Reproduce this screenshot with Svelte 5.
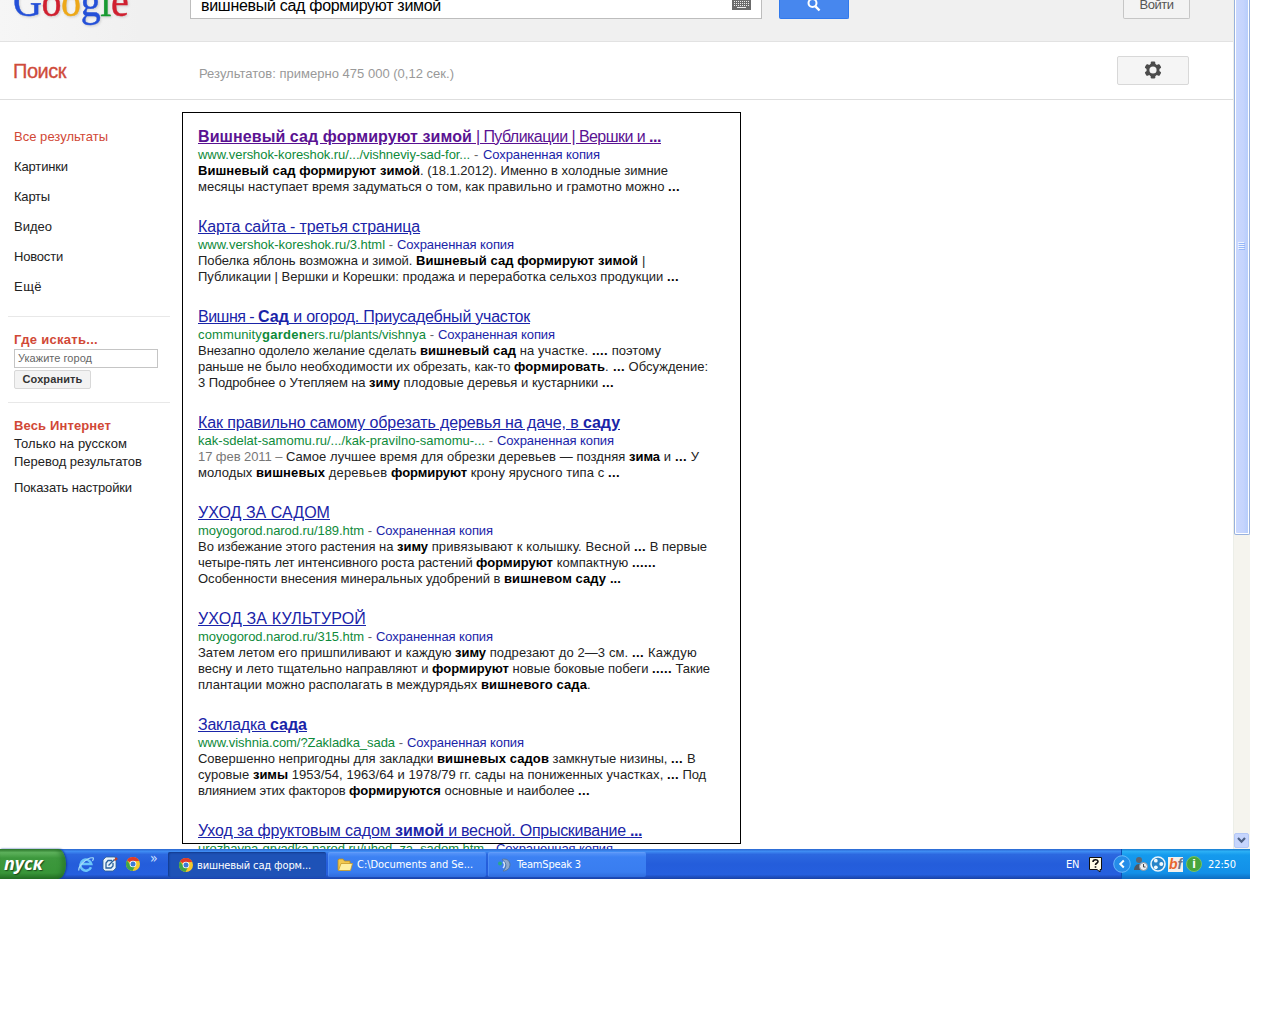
<script>
  // Stretches or tightens a run of text so that it fills the given width.
  function fit(node, width) {
    const natural = node.getBoundingClientRect().width;
    node.style.letterSpacing = (width - natural) / [...node.textContent].length + 'px';
  }

  // Each run: [text, right edge, bold]. Runs of a line start at LEFT.
  const LEFT = 198;
  const runs = (line) =>
    line.map(([text, end, bold], i) => ({ text, bold, width: end - (i ? line[i - 1][1] : LEFT) }));

  const results = [
    {
      visited: true,
      title: [['Вишневый сад формируют зимой', 472, 1], [' | Публикации | Вершки и ', 649], ['...', 661, 1]],
      url: [['www.vershok-koreshok.ru/.../vishneviy-sad-for...', 470]],
      cached: 600,
      lines: [
        [['Вишневый сад формируют зимой', 420, 1], ['. (18.1.2012). Именно в холодные зимние', 668]],
        [['месяцы наступает время задуматься о том, как правильно и грамотно можно ', 668], ['...', 680, 1]]
      ]
    },
    {
      title: [['Карта сайта - третья страница', 420]],
      url: [['www.vershok-koreshok.ru/3.html', 385]],
      cached: 514,
      lines: [
        [['Побелка яблонь возможна и зимой. ', 416], ['Вишневый сад формируют зимой', 638, 1], [' |', 646]],
        [['Публикации | Вершки и Корешки: продажа и переработка сельхоз продукции ', 667], ['...', 679, 1]]
      ]
    },
    {
      title: [['Вишня - ', 258], ['Сад', 289, 1], [' и огород. Приусадебный участок', 530]],
      url: [['community', 262], ['garden', 307, 1], ['ers.ru/plants/vishnya', 426]],
      cached: 555,
      lines: [
        [['Внезапно одолело желание сделать ', 420], ['вишневый сад', 516, 1], [' на участке. ', 592], ['....', 608, 1], [' поэтому', 661]],
        [['раньше не было необходимости их обрезать, как-то ', 514], ['формировать', 605, 1], ['. ', 613], ['...', 625, 1], [' Обсуждение:', 708]],
        [['3 Подробнее о Утепляем на ', 369], ['зиму', 400, 1], [' плодовые деревья и кустарники ', 602], ['...', 614, 1]]
      ]
    },
    {
      title: [['Как правильно самому обрезать деревья на даче, в ', 583], ['саду', 620, 1]],
      url: [['kak-sdelat-samomu.ru/.../kak-pravilno-samomu-...', 485]],
      cached: 614,
      date: true,
      lines: [
        [['17 фев 2011 – ', 286], ['Самое лучшее время для обрезки деревьев — поздняя ', 629], ['зима', 660, 1], [' и ', 675], ['...', 687, 1], [' У', 699]],
        [['молодых ', 256], ['вишневых', 325, 1], [' деревьев ', 391], ['формируют', 467, 1], [' крону ярусного типа с ', 608], ['...', 620, 1]]
      ]
    },
    {
      title: [['УХОД ЗА САДОМ', 330]],
      url: [['moyogorod.narod.ru/189.htm', 364]],
      cached: 493,
      lines: [
        [['Во избежание этого растения на ', 397], ['зиму', 428, 1], [' привязывают к колышку. Весной ', 634], ['...', 646, 1], [' В первые', 707]],
        [['четыре-пять лет интенсивного роста растений ', 476], ['формируют', 553, 1], [' компактную ', 632], ['......', 656, 1]],
        [['Особенности внесения минеральных удобрений в ', 504], ['вишневом саду ...', 621, 1]]
      ]
    },
    {
      title: [['УХОД ЗА КУЛЬТУРОЙ', 366]],
      url: [['moyogorod.narod.ru/315.htm', 364]],
      cached: 493,
      lines: [
        [['Затем летом его пришпиливают и каждую ', 455], ['зиму', 486, 1], [' подрезают до 2—3 см. ', 632], ['...', 644, 1], [' Каждую', 697]],
        [['весну и лето тщательно направляют и ', 432], ['формируют', 509, 1], [' новые боковые побеги ', 652], ['.....', 672, 1], [' Такие', 710]],
        [['плантации можно располагать в междурядьях ', 481], ['вишневого сада', 587, 1], ['.', 590]]
      ]
    },
    {
      title: [['Закладка ', 270], ['сада', 307, 1]],
      url: [['www.vishnia.com/?Zakladka_sada', 395]],
      cached: 524,
      lines: [
        [['Совершенно непригодны для закладки ', 437], ['вишневых садов', 549, 1], [' замкнутые низины, ', 671], ['...', 683, 1], [' В', 696]],
        [['суровые ', 253], ['зимы', 288, 1], [' 1953/54, 1963/64 и 1978/79 гг. сады на пониженных участках, ', 667], ['...', 679, 1], [' Под', 706]],
        [['влиянием этих факторов ', 349], ['формируются', 441, 1], [' основные и наиболее ', 578], ['...', 590, 1]]
      ]
    },
    {
      title: [['Уход за фруктовым садом ', 395], ['зимой', 444, 1], [' и весной. Опрыскивание ', 630], ['...', 642, 1]],
      url: [['urozhayna-gryadka.narod.ru/uhod_za_sadom.htm', 484]],
      cached: 613,
      lines: []
    }
  ];

  const nav = [['Картинки', 54], ['Карты', 36], ['Видео', 38], ['Новости', 49], ['Ещё', 28]];
  const logo = [['G', 'b'], ['o', 'r'], ['o', 'y'], ['g', 'b'], ['l', 'g'], ['e', 'r']];
</script>

{#snippet text(line)}{#each runs(line) as r}<span class:bold={r.bold} use:fit={r.width}>{r.text}</span>{/each}{/snippet}

{#snippet chrome()}
  <svg width="14" height="14" viewBox="0 0 14 14">
    <circle cx="7" cy="7" r="7" fill="#f5c92c" />
    <path d="M7 7 1 3.4A7 7 0 0 1 13.2 4L7 4.2z" fill="#df3b2b" />
    <path d="M1 3.4A7 7 0 0 0 6.5 14L9 9 5 8.5z" fill="#3fa548" />
    <circle cx="7" cy="7" r="3.3" fill="#fff" />
    <circle cx="7" cy="7" r="2.5" fill="#3c7ad6" />
  </svg>
{/snippet}

<div class="screen">
  <div class="window">
    <div class="page">
      <header>
        <div class="logo">{#each logo as [ch, c]}<span class={c}>{ch}</span>{/each}</div>
        <div class="query">
          <span use:fit={240}>вишневый сад формируют зимой</span>
          <svg width="19" height="14" viewBox="0 0 19 14">
            <path d="M0 0h19v14H0z" fill="#6b6b6b" />
            <path d="M2 5.500h15M2 7.500h15M2 9.500h15" stroke="#eee" stroke-dasharray="1 1" />
            <path d="M5 11.500h9" stroke="#eee" />
          </svg>
        </div>
        <div class="search">
          <svg width="14" height="15" viewBox="0 0 14 15" fill="none" stroke="#fff" stroke-width="2">
            <circle cx="5.5" cy="6" r="4" /><path d="m8.5 9.3 4 4.2" stroke-width="2.4" />
          </svg>
        </div>
        <div class="login"><span use:fit={34}>Войти</span></div>
      </header>

      <div class="bar">
        <h1><span use:fit={53}>Поиск</span></h1>
        <div class="stats"><span use:fit={255}>Результатов: примерно 475 000 (0,12 сек.)</span></div>
        <div class="gear">
          <svg width="18" height="18" viewBox="-9 -9 18 18">
            <g fill="#4c4c4c">
              {#each [0, 60, 120] as a}<rect x="-2.3" y="-8.5" width="4.6" height="17" rx="1.2" transform="rotate({a})" />{/each}
            </g>
            <circle r="5" fill="none" stroke="#4c4c4c" stroke-width="3" />
            <circle r="3.6" fill="#f5f5f5" />
          </svg>
        </div>
      </div>

      <div class="content">
        <aside>
          <nav>
            <div class="current"><span use:fit={94}>Все результаты</span></div>
            {#each nav as [label, w]}<div><span use:fit={w}>{label}</span></div>{/each}
          </nav>
          <section class="place">
            <h2><span use:fit={84}>Где искать...</span></h2>
            <div class="city"><span use:fit={74}>Укажите город</span></div>
            <div class="save"><span use:fit={60}>Сохранить</span></div>
          </section>
          <section class="scope">
            <h2><span use:fit={97}>Весь Интернет</span></h2>
            <div><span use:fit={113}>Только на русском</span></div>
            <div><span use:fit={128}>Перевод результатов</span></div>
            <div class="more"><span use:fit={118}>Показать настройки</span></div>
          </section>
        </aside>

        <main>
          {#each results as r}
            <article>
              <h3 class:visited={r.visited}>{@render text(r.title)}</h3>
              <div class="url"><cite>{@render text(r.url)}</cite><span class="dash" use:fit={r.cached - r.url[r.url.length - 1][1] - 117}>{' - '}</span><span class="cached" use:fit={117}>Сохраненная копия</span></div>
              {#each r.lines as line, i}
                <div class="line" class:dated={r.date && i === 0}>{@render text(line)}</div>
              {/each}
            </article>
          {/each}
        </main>
      </div>
    </div>

    <div class="scroll">
      <div class="thumb">
        <svg width="8" height="9" viewBox="0 0 8 9"><path d="M0 .5h6M0 2.500h6M0 4.500h6M0 6.500h6" stroke="#eef4fe" /><path d="M1 1.500h6M1 3.500h6M1 5.500h6M1 7.500h6" stroke="#8cb0f8" stroke-width=".8" /></svg>
      </div>
      <div class="down">
        <svg width="9" height="7" viewBox="0 0 9 7"><path d="m1 1 3.5 3.7L8 1" fill="none" stroke="#4d6185" stroke-width="2.2" /></svg>
      </div>
    </div>
  </div>

  <footer>
    <div class="start"><span use:fit={39}>пуск</span></div>
    <div class="quick">
      <svg width="16" height="16" viewBox="0 0 16 16" fill="none">
        <path d="M13 11.2A5.5 5.5 0 1 1 13.3 8H4" stroke="#6cc7fa" stroke-width="2.5" />
        <path d="M1 14.5C-.5 11 9 1 15 1.8c.8.6.2 2-.6 3" stroke="#a5dcf8" stroke-width="1.2" />
      </svg>
      <svg width="16" height="16" viewBox="0 0 16 16">
        <path d="m1 4 3-3h9l1 2v9l-3 3H3l-2-2z" fill="#e8f3fb" stroke="#2d5f91" stroke-width=".8" />
        <path d="M10 4.500H6L4 7v5h5l2-2V7M6.500 9.500l6-6" fill="none" stroke="#29629b" stroke-width="1.300" />
        <path d="m12 4 2-3 2 2-3 2z" fill="#b7422f" />
      </svg>
      {@render chrome()}
      <span class="chev">»</span>
    </div>
    <div class="task active">{@render chrome()}<span use:fit={114}>вишневый сад форм...</span></div>
    <div class="task">
      <svg width="16" height="14" viewBox="0 0 16 14">
        <path d="M1 12V2l1-1h4l1.5 2H13v9z" fill="#f2c94f" stroke="#b98a1e" stroke-width=".8" />
        <path d="M1.500 12.500 4 5.500h11.500l-2 7z" fill="#fff0a0" stroke="#c79b2a" stroke-width=".8" />
      </svg>
      <span use:fit={116}>C:\Documents and Se...</span>
    </div>
    <div class="task">
      <svg width="16" height="14" viewBox="0 0 16 14" fill="none">
        <path d="M5 1.500c4-1.500 8 1 8 5s-3 6.500-7 6.500c3-3 5-7-1-11.500z" fill="#8fa9cc" stroke="#55779f" />
        <path d="M6 4c2 1 2 4 0 6" stroke="#dce8f5" stroke-width="1.400" />
        <circle cx="3" cy="5.500" r="2" fill="#2aa889" />
      </svg>
      <span use:fit={64}>TeamSpeak 3</span>
    </div>
    <div class="lang">
      <span use:fit={13}>EN</span>
      <svg width="13" height="15" viewBox="0 0 13 15">
        <path d="M.5.500h12v12H11V15L8 12.500H.5z" fill="#fffde8" stroke="#111" />
        <path d="M4 5c0-3 5-3 5-.5 0 2-2.500 1.600-2.500 3.500M6.500 9.300v1.500" fill="none" stroke="#111" stroke-width="1.600" />
      </svg>
    </div>
    <div class="tray">
      <svg class="hide" width="18" height="18" viewBox="0 0 18 18">
        <circle cx="9" cy="9" r="8.300" fill="#258de8" stroke="#7cc6ff" stroke-width=".8" />
        <path d="M10.800 5.500 7.300 9l3.500 3.500" fill="none" stroke="#fff" stroke-width="2" />
      </svg>
      <svg width="15" height="16" viewBox="0 0 15 16">
        <circle cx="6" cy="4" r="3" fill="#5d6772" /><path d="M1 14c0-3 2-6 5-6s5 3 5 6z" fill="#4d5864" />
        <circle cx="10.500" cy="10.500" r="4" fill="#e9edf0" stroke="#8894a0" /><path d="M10.500 8v3h2" fill="none" stroke="#444" />
      </svg>
      <svg width="16" height="16" viewBox="0 0 16 16">
        <circle cx="8" cy="8" r="7" fill="#2784c8" stroke="#eaf5fb" stroke-width="1.600" />
        <g fill="#f2fafd"><circle cx="5.800" cy="4.700" r="1.900" /><circle cx="11.300" cy="8" r="2" /><circle cx="5.800" cy="11.300" r="1.900" /></g>
      </svg>
      <span class="bf"><i>b</i><i>f</i></span>
      <span class="info">i</span>
      <span class="clock"><span use:fit={28}>22:50</span></span>
    </div>
  </footer>
</div>

<style>
  :global(body) { background: #fff; overflow: hidden; }
  .screen { width: 1250px; height: 879px; font-family: 'Liberation Sans', Arial, sans-serif; font-size: 13px; color: #222; display: flex; flex-direction: column; overflow: hidden; }
  .screen * { box-sizing: border-box; }
  span { white-space: pre; }
  svg { flex: none; display: block; }
  h1, h2, h3 { margin: 0; font-weight: normal; }
  .bold { font-weight: bold; }

  .window { height: 849px; flex: none; display: flex; overflow: hidden; }
  .page { width: 1233px; flex: none; }
  header { height: 42px; background: linear-gradient(90deg, #f6f6f6, #f0f0f0 140px); border-bottom: 1px solid #e2e2e2; display: flex; align-items: flex-start; padding-left: 13px; }
  .logo { width: 177px; height: 41px; flex: none; font: 40px/30px 'Liberation Serif', serif; transform: scaleY(1.1); transform-origin: 0 0; margin-top: -15px; letter-spacing: -.4px; -webkit-text-stroke: .4px; filter: drop-shadow(1px 1px 1px #9996); }
  .b { color: #2450d8; } .r { color: #d02030; } .y { color: #eda818; } .g { color: #179a31; }
  .query { width: 572px; height: 19px; background: #fff; border: 1px solid #bdbdbd; border-top: 0; display: flex; justify-content: space-between; padding: 0 10px; font-size: 16px; line-height: 12px; color: #000; }
  .query svg { margin-top: -4px; }
  .search { width: 70px; height: 19px; margin-left: 17px; background: #4787ee; border: 1px solid #3079ed; border-top: 0; border-radius: 0 0 2px 2px; display: flex; justify-content: center; }
  .search svg { margin-top: -3px; }
  .login { width: 67px; height: 19px; margin-left: 274px; background: #f3f3f3; border: 1px solid #c6c6c6; border-top: 0; border-radius: 0 0 2px 2px; text-align: center; color: #555; line-height: 9px; }

  .bar { height: 58px; border-bottom: 1px solid #dedede; display: flex; align-items: center; padding-left: 13px; }
  h1 { width: 186px; padding-top: 2px; font-size: 20px; color: #cf4b3b; -webkit-text-stroke: .3px; }
  .stats { width: 918px; color: #999; padding-top: 6px; }
  .gear { width: 72px; height: 29px; background: #f5f5f5; border: 1px solid #d8d8d8; border-radius: 2px; display: flex; align-items: center; justify-content: center; }
  .gear svg { margin-top: -2px; }

  .content { display: flex; }
  aside { width: 182px; flex: none; padding: 22px 12px 0 8px; }
  nav { padding-left: 6px; height: 194px; }
  nav div { height: 30px; line-height: 30px; }
  .current { color: #d14836; }
  section { border-top: 1px solid #e8e8e8; padding-left: 6px; }
  h2 { font-size: 13px; font-weight: bold; color: #d14836; line-height: 18px; }
  .place { height: 86px; padding-top: 14px; }
  .city { width: 144px; height: 19px; border: 1px solid #c5c5c5; padding-left: 3px; font-size: 11px; line-height: 17px; color: #666; }
  .save { width: 77px; height: 19px; margin-top: 2px; border: 1px solid #d8d8d8; border-radius: 2px; background: #f3f3f3; font-size: 11px; font-weight: bold; line-height: 17px; text-align: center; color: #333; }
  .scope { padding-top: 14px; line-height: 18px; }
  .more { margin-top: 8px; }

  main { width: 559px; height: 732px; margin-top: 12px; border: 1px solid #000; padding: 14px 0 0 15px; white-space: nowrap; }
  article { padding-bottom: 22px; }
  h3 { font-size: 16px; line-height: 20px; height: 20px; color: #1a24a8; }
  h3 span { text-decoration: underline; }
  h3.visited { color: #5a1292; }
  .url, .line { height: 16px; line-height: 16px; }
  cite { font-style: normal; color: #0e8a3a; }
  .dash { color: #666; }
  .cached { color: #1a24a8; }
  .line .bold { color: #000; }
  .dated span:first-child { color: #777; }

  .scroll { width: 17px; flex: none; background: #f5f4ee; display: flex; flex-direction: column; justify-content: space-between; border-left: 1px solid #eceee8; }
  .thumb { width: 16px; height: 535px; border: 1px solid #98b1dd; border-top: 0; border-radius: 0 0 2px 2px; box-shadow: inset 1px -1px 0 #fff, inset -1px 0 0 #fff; background: linear-gradient(90deg, #cad8fe, #c5d4fd 60%, #b4ccfb); display: flex; justify-content: center; padding-top: 242px; }
  .down { width: 15px; height: 15px; margin-bottom: 1px; border: 1px solid #b4c8f6; border-radius: 2px; background: #c6d5fd; display: flex; align-items: center; justify-content: center; }

  footer { height: 30px; flex: none; display: flex; color: #fff; font: 11px 'DejaVu Sans Condensed', 'DejaVu Sans', sans-serif; background: linear-gradient(#2a66cf, #3f8cf3 8%, #2c68e0 18%, #245ddb 50%, #255fde 85%, #1941a5); }
  .start { width: 66px; flex: none; border-radius: 0 8px 8px 0 / 0 15px 15px 0; background: linear-gradient(#2e7a2e, #5eb25c 12%, #3d983d 30%, #389538 80%, #246f24); box-shadow: inset -4px 0 4px #1f6b2488, 1px 0 2px #123c9c; font: italic bold 18px/29px 'Open Sans', sans-serif; padding-left: 4px; text-shadow: 1px 1px 1px #1c4a1c; }
  .quick { width: 100px; flex: none; display: flex; align-items: center; gap: 8px; padding-left: 12px; }
  .chev { font-size: 14px; margin: -12px 0 0 2px; color: #cfe2ff; }
  .task { width: 158px; height: 25px; flex: none; margin: 3px 0 0 2px; border-radius: 2px; display: flex; align-items: center; gap: 4px; padding-left: 9px; background: linear-gradient(#5b98fa, #3c81f3 20%, #397df0 80%, #2f6cdd); box-shadow: inset 1px 1px 0 #6ea4fa66; }
  .task.active { padding: 1px 0 0 11px; background: #1e52b7; box-shadow: inset 1px 1px 2px #123a8c; }
  .lang { width: 476px; display: flex; justify-content: flex-end; align-items: center; gap: 10px; padding-right: 19px; }
  .tray { width: 129px; flex: none; display: flex; align-items: center; gap: 2px; background: linear-gradient(#1a7bd0, #2bb0f5 8%, #159aed 20%, #1290e8 80%, #0e6cc0); border-left: 1px solid #0d4eb0; }
  .hide { margin-left: -9px; }
  .bf { width: 15px; height: 15px; background: #f4f1ec; font: bold 14px/14px 'Liberation Sans', sans-serif; text-align: center; color: #e8662c; }
  .bf i + i { color: #6c7687; }
  .info { width: 16px; height: 16px; margin-left: 1px; border-radius: 50%; background: #47a53c; border: 1px solid #74c268; font: bold 13px/14px 'Liberation Sans', sans-serif; text-align: center; }
  .clock { margin-left: 4px; }
</style>
